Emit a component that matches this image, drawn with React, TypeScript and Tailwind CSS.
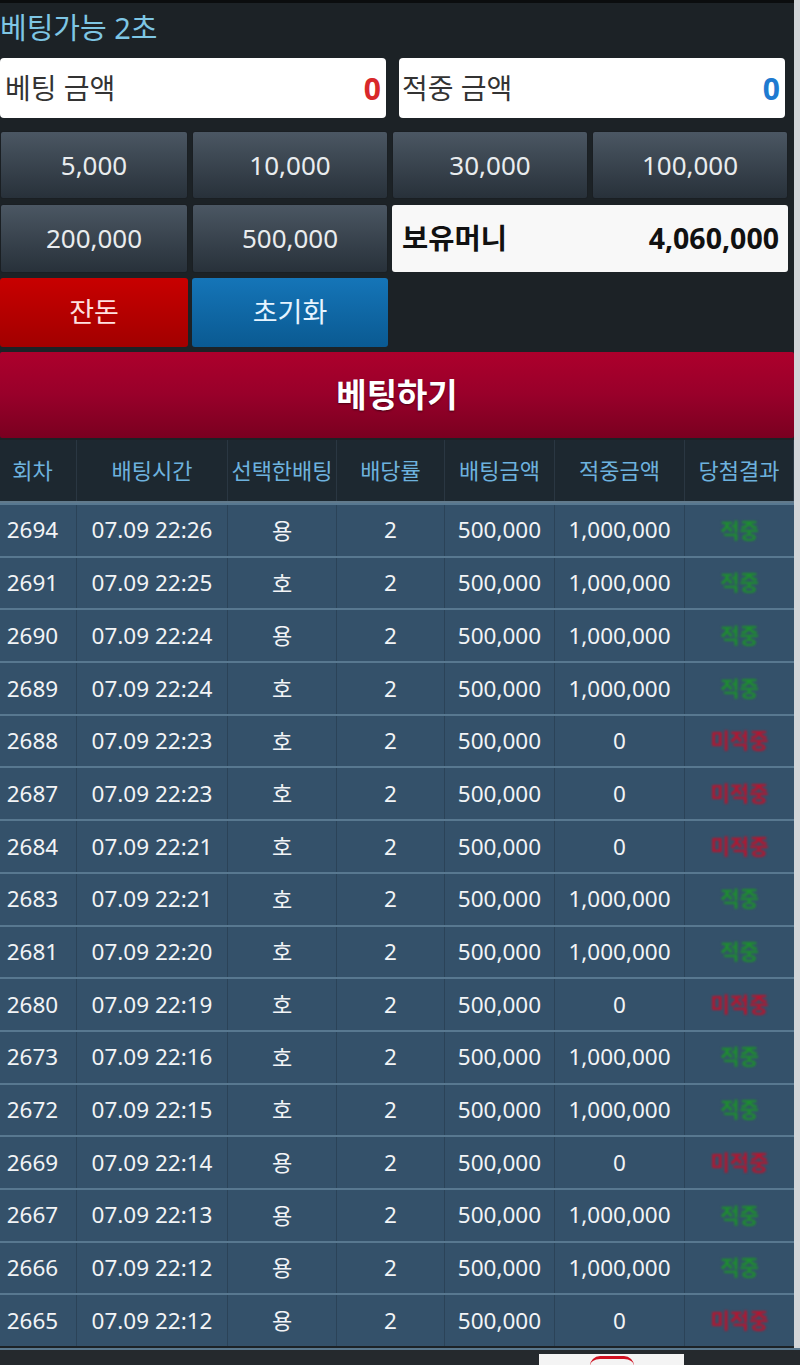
import React from "react";

const rows: [string, string, string, string][] = [
  ["2694", "22:26", "용", "1,000,000"],
  ["2691", "22:25", "호", "1,000,000"],
  ["2690", "22:24", "용", "1,000,000"],
  ["2689", "22:24", "호", "1,000,000"],
  ["2688", "22:23", "호", "0"],
  ["2687", "22:23", "호", "0"],
  ["2684", "22:21", "호", "0"],
  ["2683", "22:21", "호", "1,000,000"],
  ["2681", "22:20", "호", "1,000,000"],
  ["2680", "22:19", "호", "0"],
  ["2673", "22:16", "호", "1,000,000"],
  ["2672", "22:15", "호", "1,000,000"],
  ["2669", "22:14", "용", "0"],
  ["2667", "22:13", "용", "1,000,000"],
  ["2666", "22:12", "용", "1,000,000"],
  ["2665", "22:12", "용", "0"],
];

const font = { fontFamily: '"Noto Sans", "Noto Sans CJK KR", sans-serif' };

function Chip({ label }: { label: string }) {
  return (
    <div className="flex items-center justify-center rounded-[3px] border border-[#1a1f23] bg-gradient-to-b from-[#4b5763] to-[#28313a] text-[26px] text-[#e9ecee]">
      {label}
    </div>
  );
}

export default function App() {
  return (
    <div className="flex h-[1365px] w-[800px] flex-col bg-[#1c2226]" style={font}>
      <div className="flex h-[1348px] w-[800px]">
        <div className="flex w-[794px] flex-col bg-[#1c2226]">
          <div className="h-[3px] bg-[#0b0d0e]" />
          <div className="flex h-[52px] items-center pb-[3px] text-[29px] leading-none text-[#7ec6e4]">
            <span className="whitespace-nowrap">베팅가능 2초</span>
          </div>
          <div className="mt-[3px] flex h-[60px] gap-[13px]">
            <div className="flex w-[386px] items-center justify-between rounded-[4px] bg-white pl-[5px] pr-[5px]">
              <span className="text-[28px] text-[#333]">베팅 금액</span>
              <span className="text-[30px] font-bold text-[#d8282a]">0</span>
            </div>
            <div className="flex w-[386px] items-center justify-between rounded-[4px] bg-white pl-[3px] pr-[5px]">
              <span className="text-[28px] text-[#333]">적중 금액</span>
              <span className="text-[30px] font-bold text-[#1e7ad0]">0</span>
            </div>
          </div>
          <div className="mt-[13px] grid grid-cols-[188px_196px_196px_196px] grid-rows-[68px_69px_69px] gap-x-[4px] gap-y-[5px]">
            <Chip label="5,000" />
            <Chip label="10,000" />
            <Chip label="30,000" />
            <Chip label="100,000" />
            <Chip label="200,000" />
            <Chip label="500,000" />
            <div className="col-span-2 my-[1px] flex items-center justify-between rounded-[3px] bg-[#f8f8f8] pl-[10px] pr-[9px] text-[28.5px] font-bold text-[#111]">
              <span>보유머니</span>
              <span>4,060,000</span>
            </div>
            <div className="flex items-center justify-center rounded-[3px] bg-gradient-to-b from-[#c80000] to-[#a20000] text-[27px] text-[#ffe0e0]">
              잔돈
            </div>
            <div className="flex items-center justify-center rounded-[3px] bg-gradient-to-b from-[#1575b8] to-[#0a5a92] text-[27px] text-[#e6f4ff]">
              초기화
            </div>
          </div>
          <div className="mt-[5px] flex h-[86px] items-center justify-center rounded-[2px] bg-gradient-to-b from-[#ad002c] via-[#98002a] to-[#7a0020] text-[33px] font-bold text-white [text-shadow:0_1px_2px_rgba(0,0,0,0.5)]">
            베팅하기
          </div>
          <div className="mt-[2px] grid h-[63px] grid-cols-[77px_151px_109px_108px_110px_130px_109px] border-b-2 border-[#617a8c] bg-[#1d2830] text-[22px] text-[#6db2de]">
            {["회차", "배팅시간", "선택한배팅", "배당률", "배팅금액", "적중금액", "당첨결과"].map((h, i) => (
              <div
                key={h}
                className={
                  "flex items-center justify-center whitespace-nowrap border-r border-[#2a3742] " + (i === 0 ? "pr-[11px]" : "")
                }
              >
                {h}
              </div>
            ))}
          </div>
          {rows.map(([no, t, pick, win]) => {
            const hit = win !== "0";
            return (
              <div
                key={no}
                className="grid h-[52.7px] grid-cols-[77px_151px_109px_108px_110px_130px_109px] border-t-2 border-[#587890] bg-[#34516a] text-[22.5px] text-[#f2f4f6]"
              >
                <div className="flex items-center justify-center border-r border-[#2b4358] pr-[11px]">{no}</div>
                <div className="flex items-center justify-center whitespace-nowrap border-r border-[#2b4358]">07.09 {t}</div>
                <div className="flex items-center justify-center border-r border-[#2b4358] text-[22px]">{pick}</div>
                <div className="flex items-center justify-center border-r border-[#2b4358]">2</div>
                <div className="flex items-center justify-center border-r border-[#2b4358]">500,000</div>
                <div className="flex items-center justify-center border-r border-[#2b4358]">{win}</div>
                <div className="flex items-center justify-center">
                  <span
                    className={
                      "text-[21px] font-bold blur-[1.3px] " + (hit ? "text-[#1d8f2e]" : "text-[#b8142e]")
                    }
                  >
                    {hit ? "적중" : "미적중"}
                  </span>
                </div>
              </div>
            );
          })}
        </div>
        <div className="w-[6px] bg-[#d3d6d9]" />
      </div>
      <div className="relative h-[17px] border-t-2 border-[#5a788e] bg-[#25292d]">
        <div className="absolute left-[539px] top-[4px] h-[13px] w-[145px] overflow-hidden bg-[#f4f4f4]">
          <div className="mx-auto mt-[2px] h-[10px] w-[44px] rounded-t-full border-t-[3px] border-[#d01020]" />
        </div>
      </div>
    </div>
  );
}
